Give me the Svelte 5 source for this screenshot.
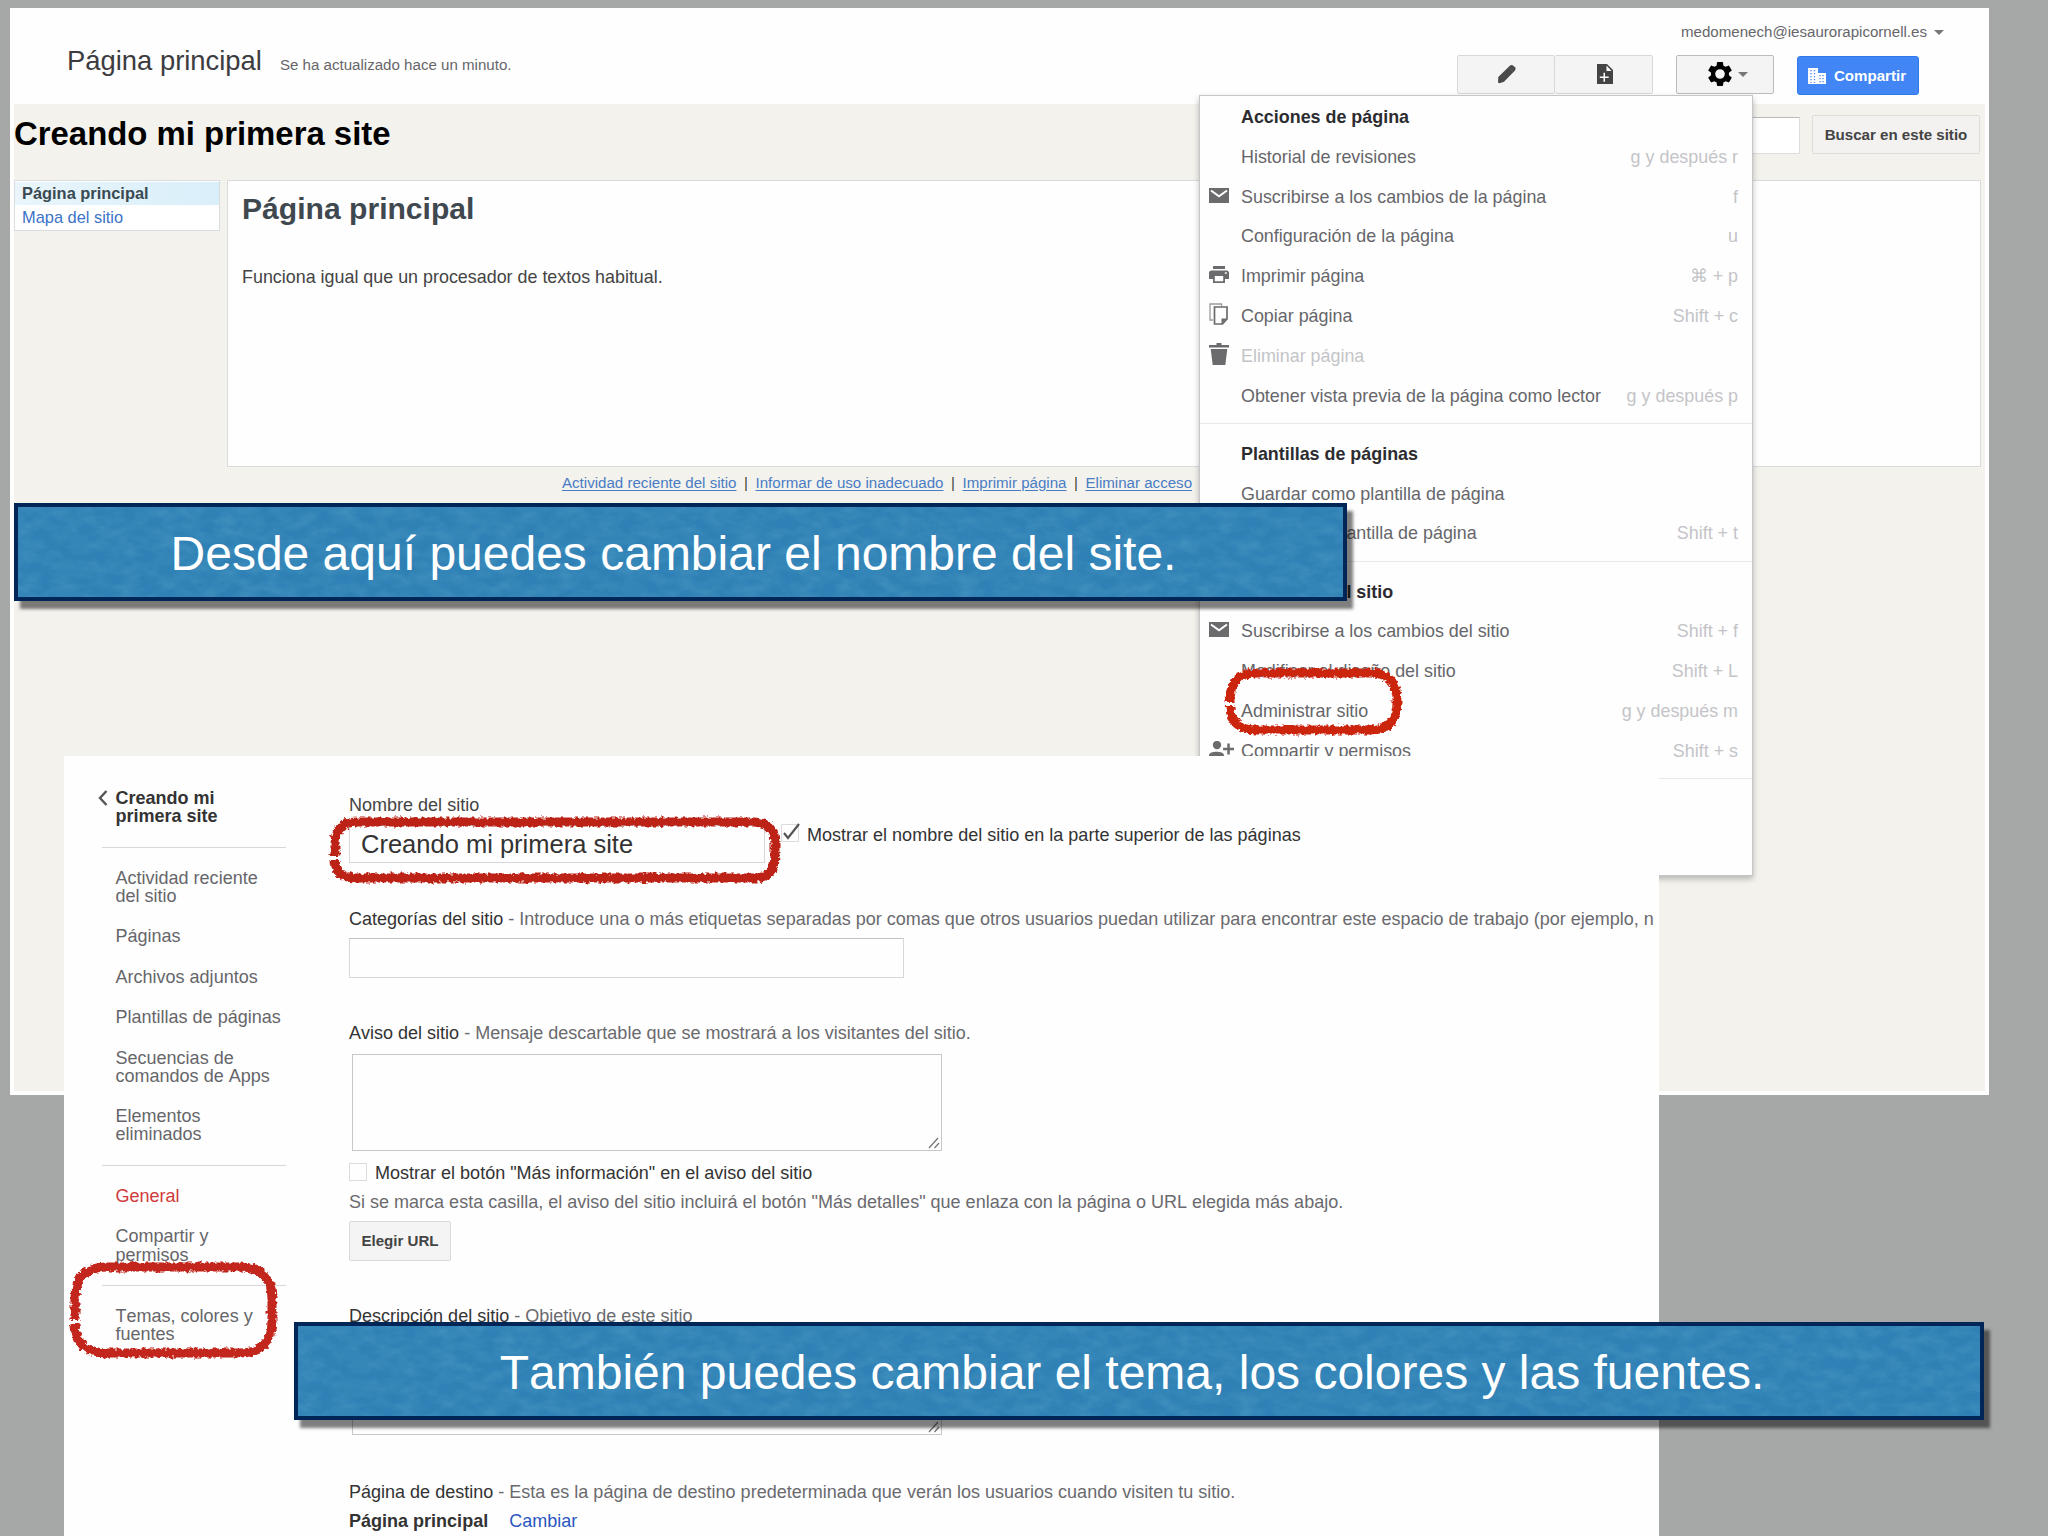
<script lang="ts">
	interface Item {
		label: string;
		keys?: string;
		icon?: string;
		disabled?: boolean;
	}

	interface Group {
		title: string;
		items: Item[];
	}

	interface Mark {
		x: number;
		y: number;
		w: number;
		h: number;
		r: number;
		gap: number;
		color: string;
	}

	const groups: Group[] = [
		{
			title: 'Acciones de página',
			items: [
				{ label: 'Historial de revisiones', keys: 'g y después r' },
				{ label: 'Suscribirse a los cambios de la página', keys: 'f', icon: 'mail' },
				{ label: 'Configuración de la página', keys: 'u' },
				{ label: 'Imprimir página', keys: '⌘ + p', icon: 'print' },
				{ label: 'Copiar página', keys: 'Shift + c', icon: 'copy' },
				{ label: 'Eliminar página', icon: 'trash', disabled: true },
				{ label: 'Obtener vista previa de la página como lector', keys: 'g y después p' }
			]
		},
		{
			title: 'Plantillas de páginas',
			items: [
				{ label: 'Guardar como plantilla de página' },
				{ label: 'Cambiar la plantilla de página', keys: 'Shift + t' }
			]
		},
		{
			title: 'Acciones del sitio',
			items: [
				{ label: 'Suscribirse a los cambios del sitio', keys: 'Shift + f', icon: 'mail' },
				{ label: 'Modificar el diseño del sitio', keys: 'Shift + L' },
				{ label: 'Administrar sitio', keys: 'g y después m' },
				{ label: 'Compartir y permisos', keys: 'Shift + s', icon: 'person' }
			]
		}
	];

	const footer = ['Actividad reciente del sitio', 'Informar de uso inadecuado', 'Imprimir página', 'Eliminar acceso'];

	const sideTop = [
		['Actividad reciente', 'del sitio'],
		['Páginas'],
		['Archivos adjuntos'],
		['Plantillas de páginas'],
		['Secuencias de', 'comandos de Apps'],
		['Elementos', 'eliminados']
	];

	const marks: Mark[] = [
		{ x: 1230, y: 673, w: 167, h: 57, r: 27, gap: 704, color: '#cb2510' },
		{ x: 335, y: 822, w: 440, h: 56, r: 22, gap: 858, color: '#bd2419' },
		{ x: 75, y: 1267, w: 197, h: 86, r: 32, gap: 1322, color: '#c2261b' }
	];

	// rounded rectangle that starts and ends at a small gap on its left side
	function outline(m: Mark) {
		const { x, y, w, h, r, gap } = m;
		return `M${x} ${gap - 2} V${y + r} Q${x} ${y} ${x + r} ${y} H${x + w - r} Q${x + w} ${y} ${x + w} ${y + r} V${y + h - r} Q${x + w} ${y + h} ${x + w - r} ${y + h} H${x + r} Q${x} ${y + h} ${x} ${gap + 2}`;
	}
</script>

{#snippet icon(name: string)}
	{#if name === 'mail'}
		<svg width="20" height="15" viewBox="0 0 20 15"><path fill="#6b6b6e" d="M0 0h20v15H0z" /><path d="M2 2.500 10 8.200 18 2.500" fill="none" stroke="#fff" stroke-width="2" /></svg>
	{:else if name === 'print'}
		<svg width="20" height="17" viewBox="0 0 20 17">
			<path fill="#6b6b6e" d="M4 0h12v3H4zM2.500 4.500h15A2.500 2.500 0 0 1 20 7v6h-4v4H4v-4H0V7a2.500 2.500 0 0 1 2.500-2.500z" />
			<path fill="#fff" d="M5.800 10h8.400v5.300H5.800zM15.800 6.200h2v1.600h-2z" />
		</svg>
	{:else if name === 'copy'}
		<svg width="19" height="22" viewBox="0 0 19 22">
			<path d="M4 17H1V1h11.500v2.500" fill="none" stroke="#9a9a9c" stroke-width="1.300" />
			<path d="M5.500 4H18v12l-4.500 5h-8z" fill="#fff" stroke="#6b6b6e" stroke-width="1.700" />
			<path d="M12.500 21v-5.500H18z" fill="#6b6b6e" />
		</svg>
	{:else if name === 'trash'}
		<svg width="20" height="22" viewBox="0 0 20 22"><path fill="#6b6b6e" d="M7.500 2V0h5v2H20v2.600H0V2zM1.700 6h16.600l-2 16H3.700z" /></svg>
	{:else if name === 'person'}
		<svg width="25" height="17" viewBox="0 0 25 17">
			<circle cx="8" cy="4" r="4.200" fill="#6b6b6e" />
			<path fill="#6b6b6e" d="M0 17v-2.500c0-2.800 4-3.800 7.500-3.800s7.500 1 7.500 3.800V17zM18.300 2.500h2.500v4.200H25v2.500h-4.200v4.200h-2.500V9.200h-4.200V6.700h4.200z" />
		</svg>
	{/if}
{/snippet}

{#snippet grip()}
	<svg class="grip" width="12" height="12" viewBox="0 0 12 12"><path d="M1 11 10 1M6.500 11 11 6" stroke="#777" stroke-width="1.300" /></svg>
{/snippet}

{#snippet banner(text: string)}
	<svg class="paper" width="100%" height="100%"><rect width="100%" height="100%" filter="url(#paper)" /></svg>
	<span>{text}</span>
{/snippet}

<div class="slide">
	<section class="site">
		<header>
			<div class="title">
				<span class="page">Página principal</span>
				<span class="updated">Se ha actualizado hace un minuto.</span>
			</div>
			<div class="right">
				<div class="account">medomenech@iesaurorapicornell.es <i class="caret"></i></div>
				<div class="tools">
					<div class="pair">
						<div class="btn">
							<svg width="20" height="20" viewBox="0 0 20 20"><path fill="#4a4a4a" d="M1 18.500 1.300 13 12.800 1.800q1.500-1.300 3.200-.2l2 1.700q1.300 1.500 0 3.200L7 17.800l-4.500 1.500z" /><path d="M12 3.500l4.300 4" stroke="#666" stroke-width=".8" /></svg>
						</div>
						<div class="btn">
							<svg width="16" height="20" viewBox="0 0 16 20">
								<path fill="#444" d="M0 0h10l6 6v14H0z" />
								<path fill="#fff" d="M9.500 1.500 14.500 7h-5zM6.500 8.800H8v3.700h3.700V14H8v3.700H6.500V14H2.800v-1.500h3.700z" />
							</svg>
						</div>
					</div>
					<div class="btn gear">
						<svg width="24" height="24" viewBox="2 2 20 20"><path d="M19.430 12.980c.04-.32.07-.64.07-.98s-.03-.66-.07-.98l2.110-1.650c.19-.15.24-.42.12-.64l-2-3.460c-.12-.22-.39-.3-.61-.22l-2.490 1c-.52-.4-1.080-.73-1.690-.98l-.38-2.650A.488.488 0 0 0 14 2h-4c-.25 0-.46.18-.49.42l-.38 2.650c-.61.25-1.170.59-1.690.98l-2.490-1c-.23-.09-.49 0-.61.22l-2 3.460c-.13.22-.07.49.12.64l2.110 1.650c-.04.32-.07.65-.07.98s.03.66.07.98l-2.110 1.650c-.19.15-.24.42-.12.64l2 3.460c.12.22.39.3.61.22l2.490-1c.52.4 1.080.73 1.690.98l.38 2.650c.03.24.24.42.49.42h4c.25 0 .46-.18.49-.42l.38-2.650c.61-.25 1.170-.59 1.690-.98l2.490 1c.23.09.49 0 .61-.22l2-3.460c.12-.22.07-.49-.12-.64zM12 16a4 4 0 1 1 0-8 4 4 0 0 1 0 8z" /></svg>
						<i class="caret"></i>
					</div>
					<div class="share">
						<svg width="18" height="16" viewBox="0 0 18 16">
							<path fill="#fff" d="M0 0h10v5h8v11H0z" />
							<path stroke="#4285f4" stroke-width="1.300" stroke-dasharray="1.300 1.700" d="M3 2v13M6.500 2v13M12 7v8M15 7v8" />
						</svg>
						Compartir
					</div>
				</div>
			</div>
		</header>
		<div class="body">
			<div class="heading">
				<h1>Creando mi primera site</h1>
				<div class="search">
					<div class="field"></div>
					<div class="btn">Buscar en este sitio</div>
				</div>
			</div>
			<div class="columns">
				<nav>
					<b>Página principal</b>
					<span>Mapa del sitio</span>
				</nav>
				<article>
					<h2>Página principal</h2>
					<p>Funciona igual que un procesador de textos habitual.</p>
				</article>
			</div>
			<div class="links">
				{#each footer as f, i}
					{#if i}<i>|</i>{/if}<u>{f}</u>
				{/each}
			</div>
		</div>
	</section>

	<div class="menu">
		{#each groups as g}
			<div class="row head">{g.title}</div>
			{#each g.items as it}
				<div class="row" class:disabled={it.disabled}>
					<span class="icon">{#if it.icon}{@render icon(it.icon)}{/if}</span>
					<span class="label">{it.label}</span>
					<span class="keys">{it.keys ?? ''}</span>
				</div>
			{/each}
			<div class="sep"></div>
		{/each}
	</div>

	<section class="admin">
		<aside>
			<div class="back">
				<svg width="10" height="16" viewBox="0 0 10 16"><path d="M8.500 1 2 8l6.500 7" fill="none" stroke="#555" stroke-width="2.400" /></svg>
				Creando mi<br />primera site
			</div>
			<hr />
			{#each sideTop as lines}
				<div>{#each lines as l}<div>{l}</div>{/each}</div>
			{/each}
			<hr />
			<div class="current">General</div>
			<div>Compartir y<br />permisos</div>
			<hr />
			<div>Temas, colores y<br />fuentes</div>
		</aside>
		<main>
			<div class="line name">Nombre del sitio</div>
			<div class="nameRow">
				<div class="input big">Creando mi primera site</div>
				<span class="check"><svg width="20" height="20" viewBox="0 0 20 20"><path d="M3 10l4 5L18 1" fill="none" stroke="#555" stroke-width="2.200" /></svg></span>
				<span>Mostrar el nombre del sitio en la parte superior de las páginas</span>
			</div>
			<div class="line cats"><b>Categorías del sitio</b> - Introduce una o más etiquetas separadas por comas que otros usuarios puedan utilizar para encontrar este espacio de trabajo (por ejemplo, n</div>
			<div class="input wide"></div>
			<div class="line notice"><b>Aviso del sitio</b> - Mensaje descartable que se mostrará a los visitantes del sitio.</div>
			<div class="area">{@render grip()}</div>
			<div class="line more"><span class="check"></span><b>Mostrar el botón "Más información" en el aviso del sitio</b></div>
			<div class="line hint">Si se marca esta casilla, el aviso del sitio incluirá el botón "Más detalles" que enlaza con la página o URL elegida más abajo.</div>
			<div class="btn url">Elegir URL</div>
			<div class="line desc"><b>Descripción del sitio</b> - Objetivo de este sitio</div>
			<div class="area">{@render grip()}</div>
			<div class="line dest"><b>Página de destino</b> - Esta es la página de destino predeterminada que verán los usuarios cuando visiten tu sitio.</div>
			<div class="line landing"><strong>Página principal</strong><span>Cambiar</span></div>
		</main>
	</section>

	<svg class="marks" width="2048" height="1536" viewBox="0 0 2048 1536">
		<defs>
			<filter id="chalk" x="-10%" y="-20%" width="120%" height="140%">
				<feTurbulence type="fractalNoise" baseFrequency="0.28" numOctaves="2" seed="4" result="n" />
				<feDisplacementMap in="SourceGraphic" in2="n" scale="6" xChannelSelector="R" yChannelSelector="G" />
			</filter>
			<filter id="paper" x="0" y="0" width="100%" height="100%">
				<feTurbulence type="fractalNoise" baseFrequency="0.05 0.09" numOctaves="4" seed="7" />
				<feColorMatrix values="0 0 0 0 0.1  0 0 0 0 0.38  0 0 0 0 0.58  0.7 0 0 0 -0.22" />
			</filter>
		</defs>
		{#each marks as m}
			<path d={outline(m)} fill="none" stroke={m.color} stroke-width="9" filter="url(#chalk)" />
		{/each}
	</svg>

	<div class="banner first">{@render banner('Desde aquí puedes cambiar el nombre del site.')}</div>
	<div class="banner second">{@render banner('También puedes cambiar el tema, los colores y las fuentes.')}</div>
</div>

<style>
	:global(body) { margin: 0; }
	* { box-sizing: border-box; }
	.slide {
		position: relative;
		width: 2048px;
		height: 1536px;
		overflow: hidden;
		background: #a6a8a7;
		font: 17.9px/20px "Liberation Sans", Arial, sans-serif;
		font-kerning: none;
		color: #66666a;
		white-space: nowrap;
	}
	svg { display: block; flex: none; }

	.site { position: absolute; left: 10px; top: 8px; width: 1979px; height: 1087px; padding: 0 4px 4px; background: #fefefe; display: flex; flex-direction: column; }
	header { height: 96px; display: flex; justify-content: space-between; }
	.title { padding: 37px 0 0 53px; display: flex; align-items: baseline; gap: 18px; }
	.page { font-size: 27.4px; line-height: 32px; color: #3c3c40; }
	.updated { font-size: 15.1px; }
	.right { display: flex; flex-direction: column; align-items: flex-end; }
	.account { margin: 14px 41px 0 0; height: 20px; font-size: 15.1px; display: flex; align-items: center; gap: 7px; }
	.caret { border: 5px solid transparent; border-top-color: #777; border-bottom: 0; }
	.tools { display: flex; margin: 13px 66px 0 0; }
	.pair { display: flex; margin-right: 23px; }
	.btn {
		height: 39px;
		display: flex;
		align-items: center;
		justify-content: center;
		background: #f4f4f4;
		border: 1px solid #d8d8d8;
		border-radius: 2px;
		color: #444;
		font-weight: 700;
		font-size: 15.1px;
	}
	.pair .btn { width: 98px; padding: 0 0 2px 2px; }
	.pair .btn + .btn { border-left: 0; }
	.tools .gear { width: 98px; border-color: #bbb; gap: 6px; padding: 0 0 1px 6px; }
	.share { width: 122px; height: 39px; margin: 1px 0 0 23px; display: flex; align-items: center; justify-content: center; gap: 8px; padding-right: 2px; background: #4285f4; border: 1px solid #3079ed; border-radius: 3px; color: #fff; font-weight: 700; font-size: 15.1px; }

	.body { flex: 1; background: #f3f2ed; }
	.heading { height: 76px; display: flex; justify-content: space-between; padding: 11px 5px 0 0; }
	h1 { margin: 0; font-size: 32.9px; line-height: 38px; color: #000; }
	.search { display: flex; gap: 12px; }
	.field { width: 300px; height: 37px; margin-top: 2px; background: #fff; border: 1px solid #ddd; border-top-color: #bbb; }
	.search .btn { width: 168px; background: #f3f2f0; border-color: #dddcd9; }
	.columns { display: flex; align-items: flex-start; gap: 7px; }
	nav { width: 206px; border: 1px solid #d9dcdc; background: #fff; font-size: 16.4px; line-height: 24px; display: flex; flex-direction: column; padding-top: 1px; }
	nav b { background: linear-gradient(90deg, #e9f5fb, #d9effa); padding-left: 7px; height: 23px; line-height: 23px; color: #3a4a52; }
	nav span { padding-left: 7px; height: 25px; line-height: 25px; color: #3b73c8; }
	article { flex: 1; height: 287px; margin-right: 4px; border: 1px solid #dadcdb; background: #fefefe; padding: 11px 14px; }
	h2 { margin: 0; font-size: 30.1px; line-height: 34px; color: #40484f; }
	p { margin: 41px 0 0; line-height: 20px; color: #444; }
	.links { padding: 6px 0 0 548px; font-size: 15.1px; line-height: 20px; display: flex; color: #444; }
	.links u { color: #4a7cc4; text-underline-offset: 2px; }
	.links i { width: 19px; text-align: center; font-style: normal; }

	.menu { position: absolute; left: 1199px; top: 95px; width: 554px; height: 781px; background: #fefefe; border: 1px solid #c6c6c8; box-shadow: 0 3px 6px rgba(0, 0, 0, 0.25); }
	.row { height: 39.8px; line-height: 42px; display: flex; padding-right: 14px; }
	.icon { width: 41px; height: 39px; padding-left: 9px; display: flex; align-items: center; flex: none; }
	.label { flex: 1; }
	.keys { color: #c4c4c8; }
	.head { padding-left: 41px; font-weight: 700; color: #2c2c30; }
	.disabled .label { color: #c4c4c8; }
	.sep { height: 1px; margin: 8.4px 0 9px; background: #e8e8ea; }

	.admin { position: absolute; left: 64px; top: 756px; width: 1595px; height: 780px; background: #fefefe; display: flex; overflow: hidden; font-size: 18.03px; }
	aside { width: 285px; flex: none; padding: 33px 62px 0 38px; display: flex; flex-direction: column; gap: 22.200px; line-height: 18.200px; }
	aside > div { padding-left: 13.500px; }
	aside hr { width: 184px; height: 1px; margin: -1px 0 -1px; border: 0; background: #d9d6dc; }
	.back { position: relative; font-weight: 700; color: #333; }
	.back svg { position: absolute; left: -4px; top: 1px; }
	.current { color: #d0393a; }
	main { flex: 1; min-width: 0; color: #6a6a6e; }
	main b { font-weight: 400; color: #333; }
	.line { height: 20px; }
	.name { margin-top: 39px; color: #444; }
	.nameRow { display: flex; margin-top: 10px; height: 38px; color: #333; }
	.input { border: 1px solid #d6d6dc; border-top-color: #c2c2c6; }
	.big { width: 416px; height: 38px; padding-left: 11px; font-size: 25.5px; line-height: 37px; color: #333; }
	.nameRow .check { margin: -1px 8px 0 16px; }
	.nameRow > span:last-child { margin-top: 0; }
	.check { width: 18px; height: 18px; border: 1px solid #dcdce0; flex: none; }
	.check svg { margin: -2px 0 0 -1px; }
	.cats { margin-top: 46px; }
	.wide { width: 555px; height: 40px; margin-top: 9px; }
	.notice { margin-top: 45px; }
	.area { position: relative; width: 590px; height: 97px; margin: 11px 0 0 3px; border: 1px solid #c9c6cc; }
	.grip { position: absolute; right: 1px; bottom: 1px; }
	.more { margin-top: 12px; display: flex; gap: 8px; }
	.hint { margin-top: 9px; }
	.url { width: 102px; height: 40px; margin-top: 9px; padding-bottom: 1px; }
	.desc { margin-top: 45px; }
	.desc + .area { margin-top: 12px; }
	.dest { margin-top: 47px; }
	.landing { margin-top: 9px; display: flex; gap: 21px; color: #2a56c0; }
	strong { color: #333; }

	.marks { position: absolute; left: 0; top: 0; pointer-events: none; }
	.banner { position: absolute; height: 98px; border: 4px solid #002657; background: #2e80b5; box-shadow: 6px 8px 3px rgba(0, 0, 0, 0.5); color: #fff; font-size: 48px; line-height: 93px; text-align: center; padding-right: 14px; }
	.banner span { position: relative; }
	.paper { position: absolute; left: 0; top: 0; }
	.first { left: 14px; top: 503px; width: 1333px; }
	.second { left: 294px; top: 1322px; width: 1690px; }
</style>
